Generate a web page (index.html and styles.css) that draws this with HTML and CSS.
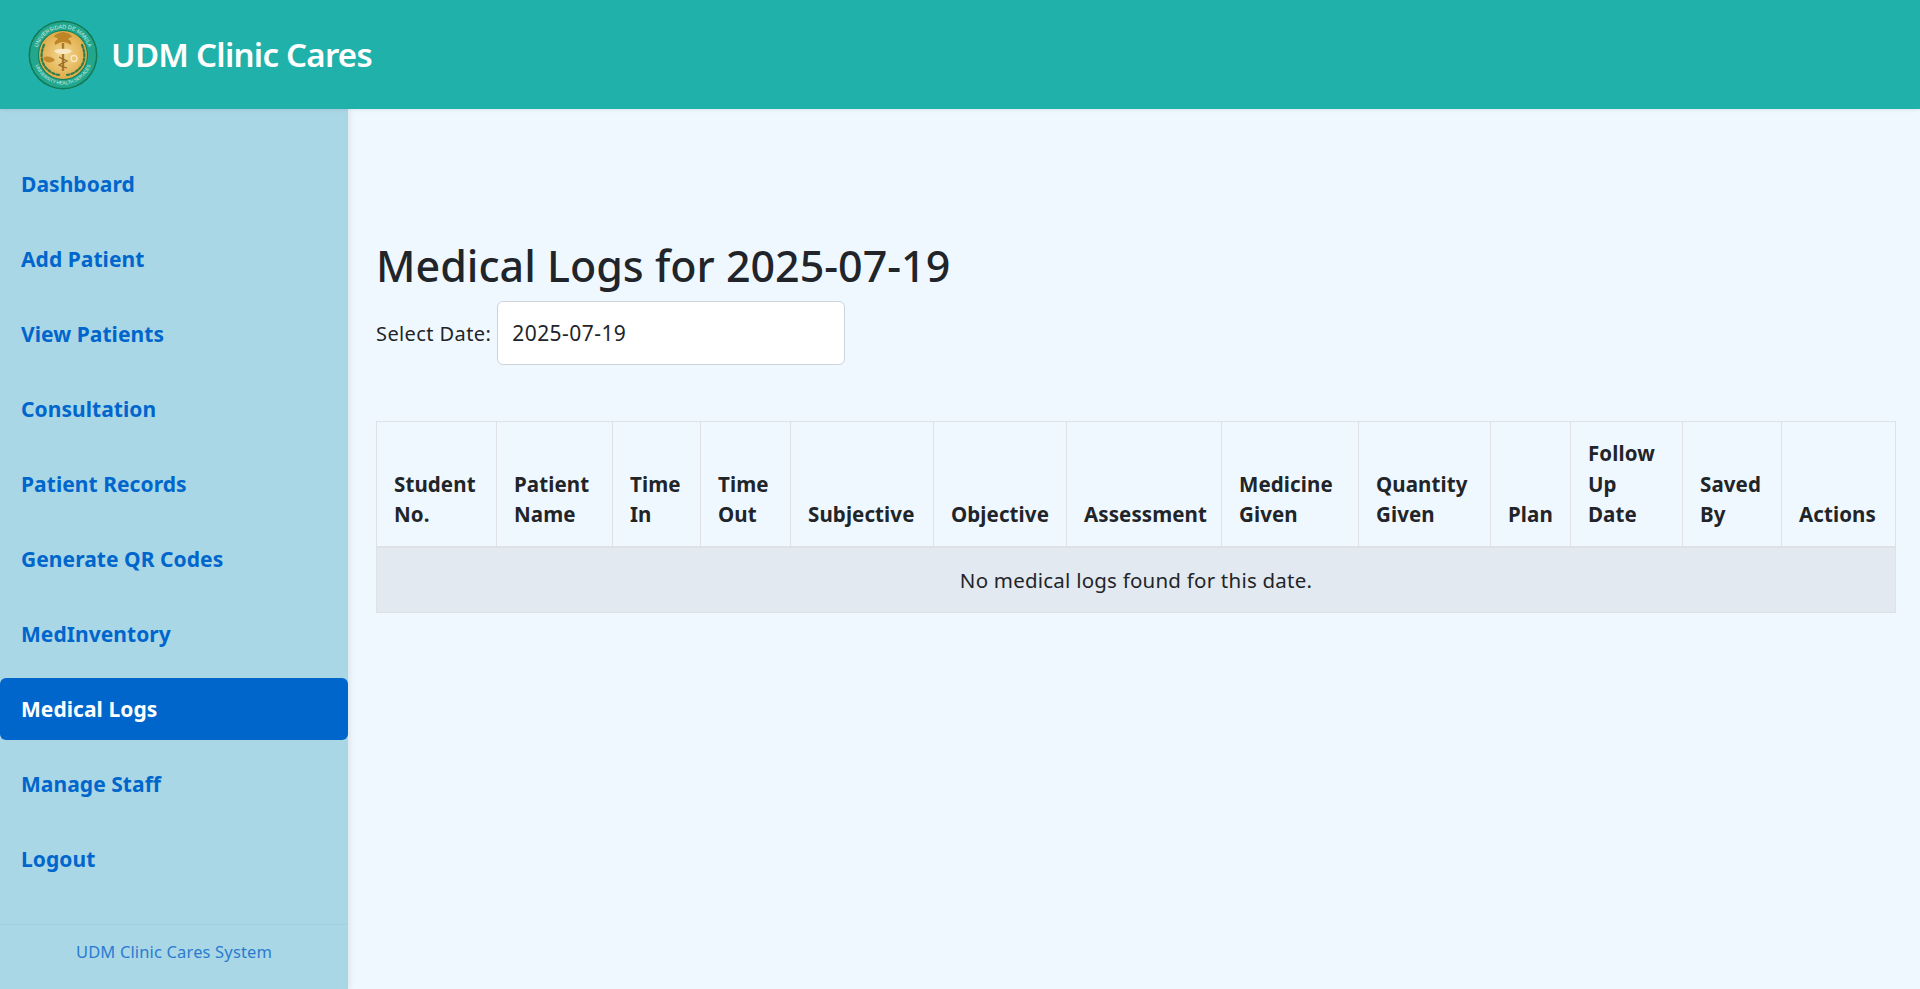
FILE: index.html
```html
<!DOCTYPE html>
<html lang="en">
<head>
<meta charset="utf-8">
<title>Medical Logs</title>
<link rel="stylesheet" href="styles.css">
</head>
<body>
<header class="topbar">
  <svg class="logo" viewBox="0 0 70 70" aria-hidden="true">
    <defs>
      <radialGradient id="gold" cx="50%" cy="50%" r="55%">
        <stop offset="0" stop-color="#f2d894"/>
        <stop offset="0.65" stop-color="#e6b95e"/>
        <stop offset="1" stop-color="#dba63f"/>
      </radialGradient>
      <path id="arcTop" d="M8.5 35a26.5 26.5 0 0 1 53 0"/>
      <path id="arcBot" d="M5.5 35a29.5 29.5 0 0 0 59 0"/>
    </defs>
    <circle cx="35" cy="35" r="34.5" fill="#137a58"/>
    <circle cx="35" cy="35" r="33" fill="#22a68c"/>
    <circle cx="35" cy="35" r="25" fill="#137a58"/>
    <circle cx="35" cy="35" r="24" fill="url(#gold)"/>
    <text class="seal seal-top"><textPath href="#arcTop" startOffset="50%">UNIVERSIDAD DE MANILA</textPath></text>
    <text class="seal seal-bot"><textPath href="#arcBot" startOffset="50%">UNIVERSITY HEALTH SERVICES</textPath></text>
    <path d="M35 12c-3 1-8 1-9 5 2 0 3 1 4 2-2 1-4 3-3 6 3-2 6-3 8-3s5 1 8 3c1-3-1-5-3-6 1-1 2-2 4-2-1-4-6-4-9-5z" fill="#bd8526"/>
    <path d="M33.8 23h2.4v28h-2.4z" fill="#a9782c"/>
    <path d="M26 31c3-3 15-3 18 0-3 3-6 3-9 3s-6 0-9-3z" fill="#f8e9c4"/>
    <path d="M31 37c3 2 5 2 8 4-3 2-5 2-8 4 3 2 5 2 8 3" fill="none" stroke="#94692a" stroke-width="1.2"/>
    <circle cx="46" cy="38.5" r="3" fill="none" stroke="#f8e9c4" stroke-width="1.3"/>
    <path d="M15 38c4-3 9-1 12 2-3 3-9 4-12-2z" fill="#c28a2c"/>
    <g fill="none" stroke="#2f7d4a" stroke-width="2.2" stroke-linecap="round" stroke-dasharray="2.4 2.2">
      <path d="M16 25c-4 9-3 18 3 24 3 3 8 6 13 6"/>
      <path d="M54 25c4 9 3 18-3 24-3 3-8 6-13 6"/>
    </g>
  </svg>
  <span class="brand">UDM Clinic Cares</span>
</header>
<div class="layout">
  <aside class="sidebar">
    <nav class="nav">
      <a class="nav-link" href="#">Dashboard</a>
      <a class="nav-link" href="#">Add Patient</a>
      <a class="nav-link" href="#">View Patients</a>
      <a class="nav-link" href="#">Consultation</a>
      <a class="nav-link" href="#">Patient Records</a>
      <a class="nav-link" href="#">Generate QR Codes</a>
      <a class="nav-link" href="#">MedInventory</a>
      <a class="nav-link active" href="#">Medical Logs</a>
      <a class="nav-link" href="#">Manage Staff</a>
      <a class="nav-link" href="#">Logout</a>
    </nav>
    <div class="side-footer">UDM Clinic Cares System</div>
  </aside>
  <main class="content">
    <h2 class="title">Medical Logs for 2025-07-19</h2>
    <form class="date-form">
      <label class="date-label" for="d">Select Date:</label>
      <input class="date-input" id="d" type="text" value="2025-07-19">
    </form>
    <table class="logs">
      <thead>
        <tr>
          <th>Student No.</th>
          <th>Patient Name</th>
          <th>Time In</th>
          <th>Time Out</th>
          <th>Subjective</th>
          <th>Objective</th>
          <th>Assessment</th>
          <th>Medicine Given</th>
          <th>Quantity Given</th>
          <th>Plan</th>
          <th>Follow Up Date</th>
          <th>Saved By</th>
          <th>Actions</th>
        </tr>
      </thead>
      <tbody>
        <tr><td class="empty" colspan="13">No medical logs found for this date.</td></tr>
      </tbody>
    </table>
  </main>
</div>
</body>
</html>
```
FILE: styles.css
```css
* { box-sizing: border-box; }
html, body { margin: 0; height: 100%; }
body {
  font-family: "Noto Sans", "Open Sans", sans-serif;
  font-size: 20px;
  color: #212529;
  background: #f0f8ff;
  display: flex;
  flex-direction: column;
  overflow: hidden;
}
.topbar {
  height: 109px;
  flex: none;
  background: #20b2aa;
  display: flex;
  align-items: center;
  padding-left: 28px;
  gap: 13px;
  position: relative;
  z-index: 2;
  box-shadow: 0 1px 4px rgba(0,0,0,.08);
}
.logo { width: 70px; height: 70px; flex: none; }
.seal { fill: #dff0e4; font-family: "Liberation Sans", sans-serif; text-anchor: middle; }
.seal-top { font-size: 5.4px; }
.seal-bot { font-size: 4.6px; }
.brand { color: #fff; font-size: 33px; font-weight: 600; letter-spacing: -0.75px; }
.layout { flex: 1; display: flex; min-height: 0; }
.sidebar {
  width: 348px;
  flex: none;
  background: #aad7e6;
  display: flex;
  flex-direction: column;
  box-shadow: 2px 0 6px rgba(0,0,0,.08);
  padding-top: 44px;
}
.nav { flex: 1; display: flex; flex-direction: column; gap: 13px; }
.nav-link {
  height: 62px;
  display: flex;
  align-items: center;
  padding-left: 21px;
  font-size: 21px;
  font-weight: 700;
  letter-spacing: 0.05px;
  color: #0066cc;
  text-decoration: none;
  border-radius: 6px;
}
.nav-link.active { background: #0066cc; color: #fff; }
.side-footer {
  height: 65px;
  flex: none;
  border-top: 1px solid #a3d0df;
  text-align: center;
  color: #2a7bd0;
  font-size: 16.5px;
  padding-top: 15px;
  letter-spacing: 0.15px;
}
.content { flex: 1; min-width: 0; padding: 129px 25px 0 28px; }
.title {
  margin: 0;
  height: 63px;
  font-size: 43px;
  line-height: 56px;
  font-weight: 500;
}
.date-form { display: flex; align-items: center; gap: 6px; margin-bottom: 56px; }
.date-label { font-size: 20px; letter-spacing: 0.4px; }
.date-input {
  width: 348px;
  height: 64px;
  padding: 0 14px;
  border: 1px solid #ced4da;
  border-radius: 6px;
  background: #fff;
  font: inherit;
  font-size: 21px;
  letter-spacing: 0.45px;
  color: #212529;
}
.logs {
  width: 1519px;
  table-layout: fixed;
  border-collapse: collapse;
  border: 1px solid #dee2e6;
}
.logs th {
  border: 1px solid #dee2e6;
  border-bottom-width: 2px;
  padding: 15px 17px 16px;
  height: 125px;
  font-size: 20.5px;
  line-height: 30.5px;
  font-weight: 700;
  letter-spacing: 0.1px;
  text-align: left;
  vertical-align: bottom;
}
.logs th:nth-child(1) { width: 120px; }
.logs th:nth-child(2) { width: 116px; }
.logs th:nth-child(3) { width: 88px; }
.logs th:nth-child(4) { width: 90px; }
.logs th:nth-child(5) { width: 143px; }
.logs th:nth-child(6) { width: 133px; }
.logs th:nth-child(7) { width: 155px; }
.logs th:nth-child(8) { width: 137px; }
.logs th:nth-child(9) { width: 132px; }
.logs th:nth-child(10) { width: 80px; }
.logs th:nth-child(11) { width: 112px; }
.logs th:nth-child(12) { width: 99px; }
.logs th:nth-child(13) { width: 114px; }
.empty {
  height: 66px;
  background: #e3e9f0;
  border: 1px solid #dee2e6;
  text-align: center;
  font-size: 20.5px;
  letter-spacing: 0.22px;
}
```
